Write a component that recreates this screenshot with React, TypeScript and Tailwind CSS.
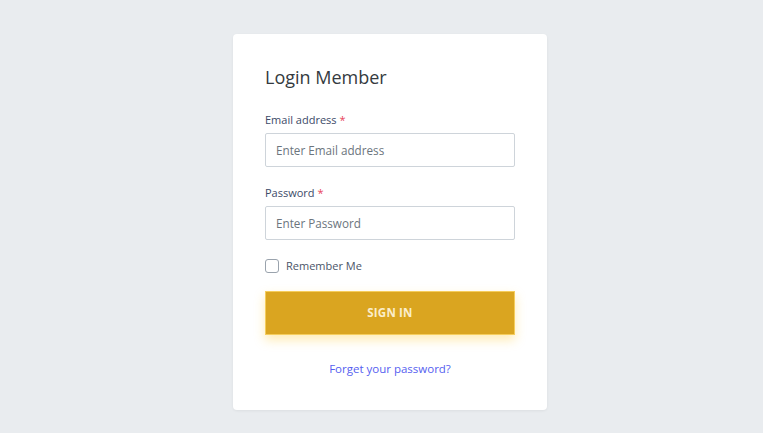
export default function App() {
  return (
    <div
      className="min-h-[433px] w-full bg-[#e9ecef] flex justify-center pl-[17px] pt-[34px]"
      style={{ fontFamily: '"Open Sans", "Noto Sans", sans-serif' }}
    >
      <div className="w-[314px] h-[376px] bg-white rounded-[4px] shadow-[0_1px_3px_rgba(0,0,0,0.06)] px-[32px] pt-[31px]">
        <h1 className="text-[18px] leading-[24px] text-[#343a40] font-normal mb-[22px]">Login Member</h1>

        <label className="block text-[11px] leading-[18px] text-[#3c4a68] mb-[4px]">
          Email address <span className="text-[#e8445a]">*</span>
        </label>
        <input
          type="text"
          placeholder="Enter Email address"
          className="block w-[250px] h-[34px] border border-[#ced4da] rounded-[2px] px-[10px] pb-[1px] text-[11.7px] text-[#495057] placeholder:text-[#6c757d] outline-none"
        />

        <label className="block mt-[17px] text-[11px] leading-[18px] text-[#3c4a68] mb-[4px]">
          Password <span className="text-[#e8445a]">*</span>
        </label>
        <input
          type="password"
          placeholder="Enter Password"
          className="block w-[250px] h-[34px] border border-[#ced4da] rounded-[2px] px-[10px] pb-[1px] text-[11.7px] text-[#495057] placeholder:text-[#6c757d] outline-none"
        />

        <div className="flex items-center mt-[19px] h-[13px]">
          <span className="w-[14px] h-[14px] border border-[#9aa3ad] rounded-[3px] bg-white"></span>
          <span className="ml-[7px] text-[11px] leading-[18px] text-[#4a5468]">Remember Me</span>
        </div>

        <button className="mt-[19px] w-[250px] h-[44px] bg-[#daa520] border border-[#f5cd5c] text-[#fbeecb] text-[11.5px] font-bold tracking-[0.2px] shadow-[0_5px_10px_rgba(255,200,40,0.35)]">
          SIGN IN
        </button>

        <div className="mt-[24px] text-center text-[11.5px] leading-[20px]">
          <a className="text-[#5560f0]">Forget your password?</a>
        </div>
      </div>
    </div>
  );
}
